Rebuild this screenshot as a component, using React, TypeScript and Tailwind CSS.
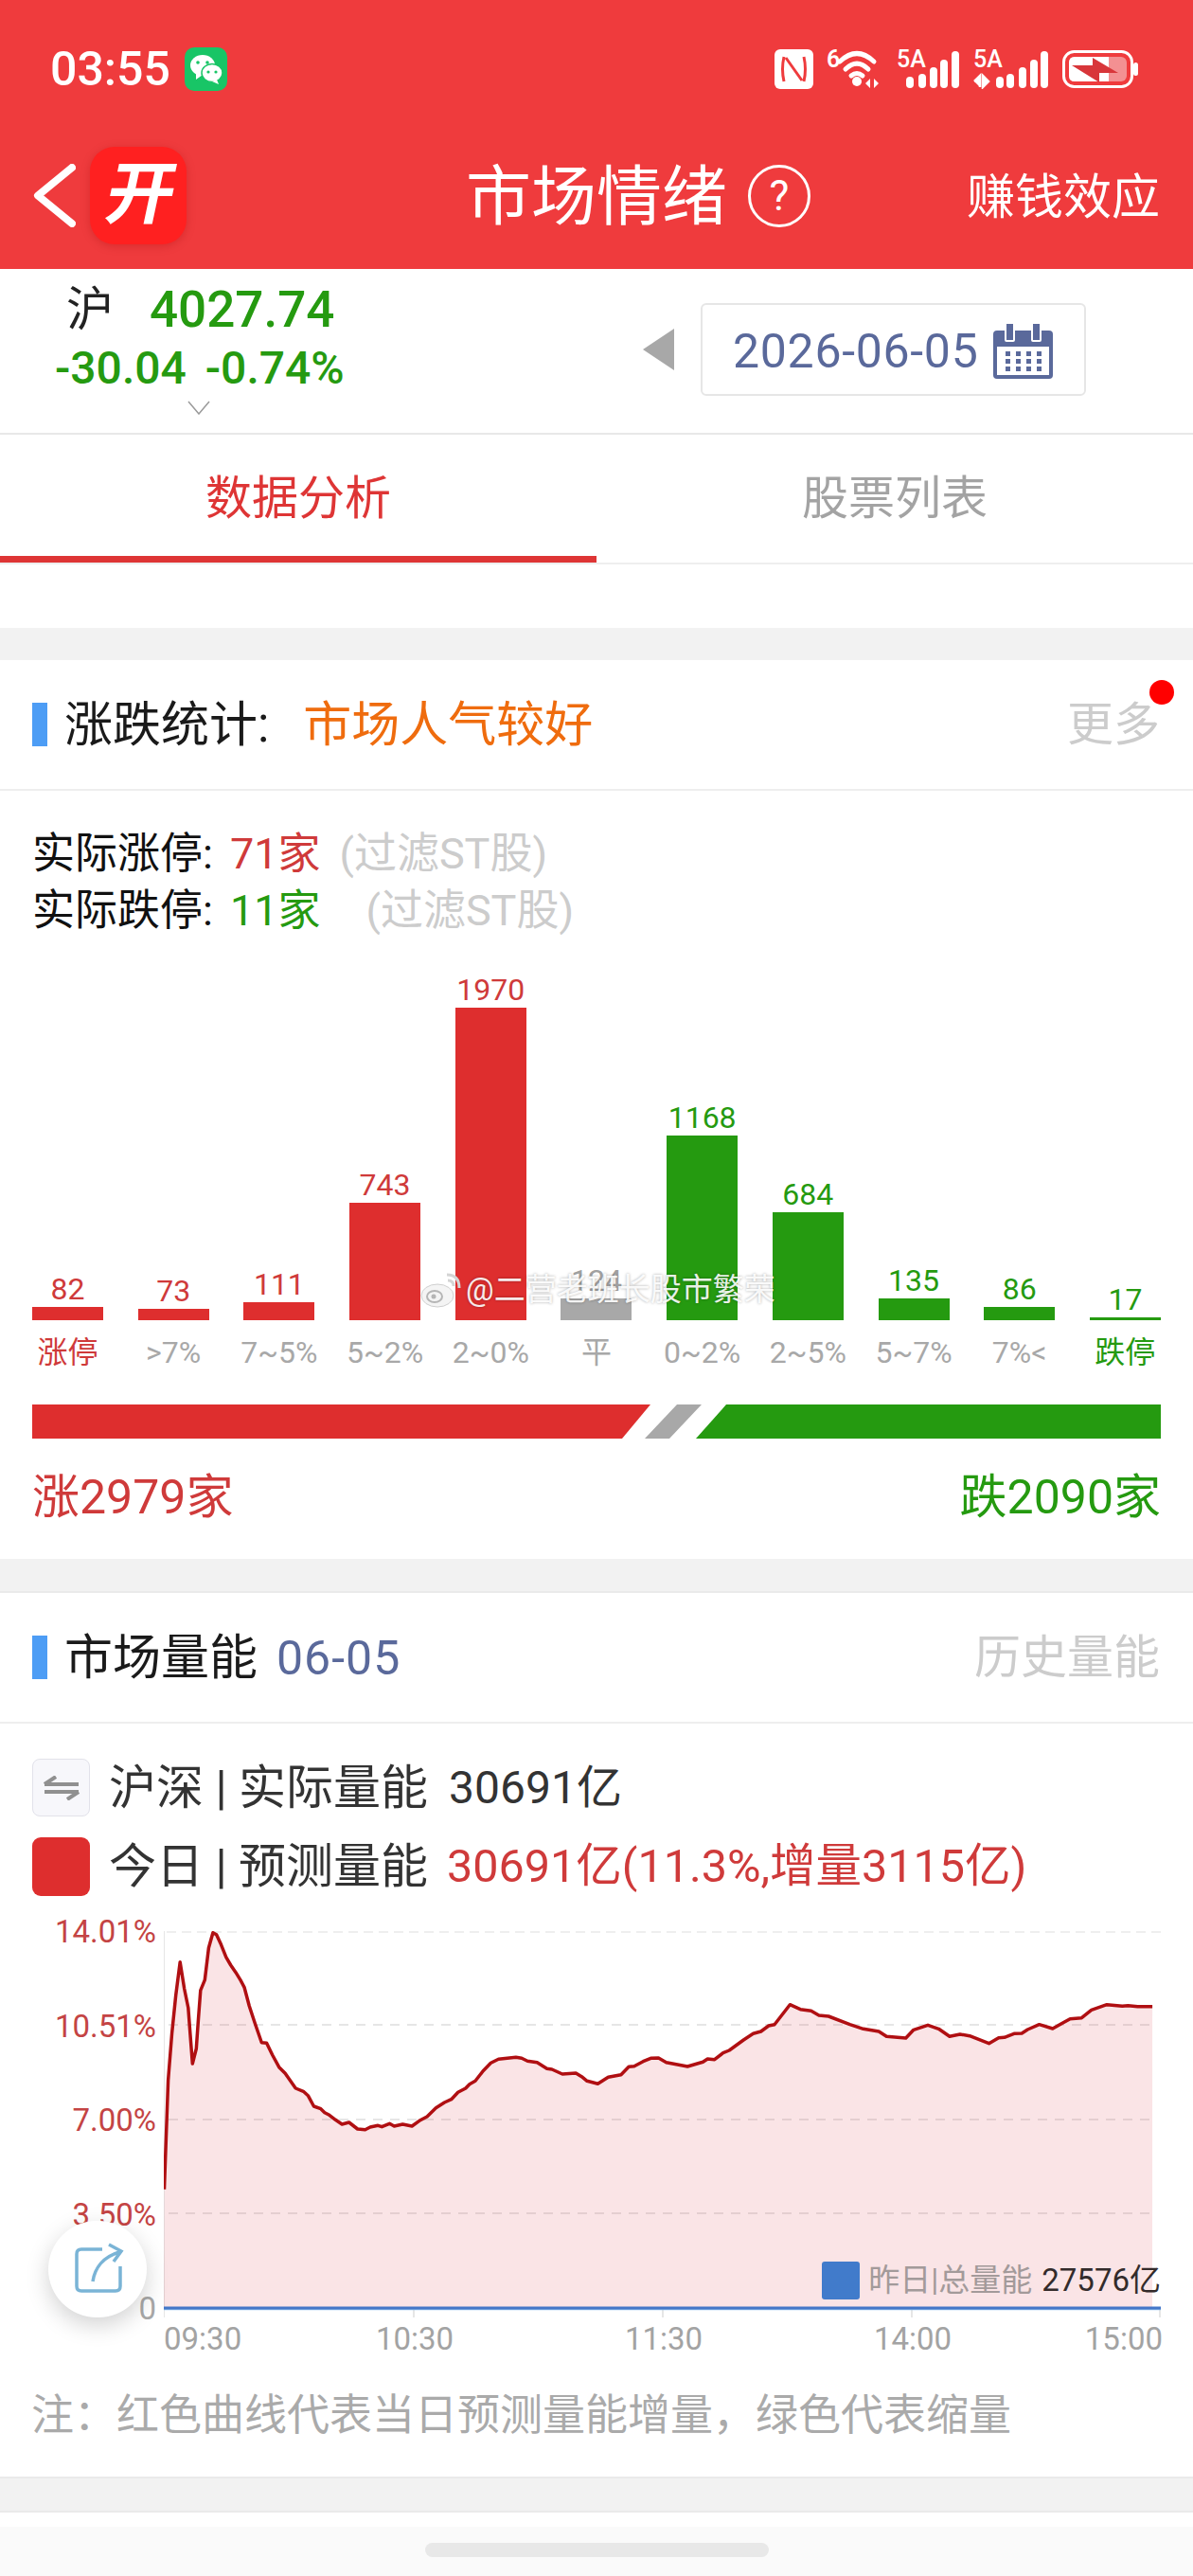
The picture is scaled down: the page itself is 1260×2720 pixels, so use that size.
// Market sentiment screen: index strip, advance/decline histogram, volume chart.
const bars = [
  { value: "82", label: "涨停", h: 14, kind: "up", labelClass: "text-[#cf3a3a]" },
  { value: "73", label: ">7%", h: 12, kind: "up", labelClass: "text-[#a8a8a8]" },
  { value: "111", label: "7~5%", h: 19, kind: "up", labelClass: "text-[#a8a8a8]" },
  { value: "743", label: "5~2%", h: 124, kind: "up", labelClass: "text-[#a8a8a8]" },
  { value: "1970", label: "2~0%", h: 330, kind: "up", labelClass: "text-[#a8a8a8]" },
  { value: "124", label: "平", h: 23, kind: "flat", labelClass: "text-[#a8a8a8]" },
  { value: "1168", label: "0~2%", h: 195, kind: "down", labelClass: "text-[#a8a8a8]" },
  { value: "684", label: "2~5%", h: 114, kind: "down", labelClass: "text-[#a8a8a8]" },
  { value: "135", label: "5~7%", h: 23, kind: "down", labelClass: "text-[#a8a8a8]" },
  { value: "86", label: "7%<", h: 14, kind: "down", labelClass: "text-[#a8a8a8]" },
  { value: "17", label: "跌停", h: 3, kind: "down", labelClass: "text-[#259a10]" },
];

// Curve traced off the reference, two halves because they were read from two crops.
const curveLeft: [number, number][] = [
  [425, 935], [432, 700], [435, 590], [445, 440], [455, 320], [466, 215], [477, 300], [487, 360],
  [492, 440], [498, 537], [508, 490], [513, 400], [519, 305], [530, 272], [540, 170], [551, 122],
  [560, 128], [572, 160], [585, 200], [597, 225], [610, 248], [622, 272], [632, 295], [645, 355],
  [660, 410], [677, 470], [690, 472], [705, 510], [722, 548], [738, 568], [765, 615], [785, 625],
  [797, 638], [812, 672], [830, 680], [840, 692], [852, 700], [868, 715], [885, 729], [903, 723],
  [925, 744], [945, 746], [958, 738], [978, 733], [988, 737], [1008, 727], [1020, 735], [1042, 729],
  [1066, 735], [1085, 718], [1105, 705], [1128, 677], [1150, 660], [1168, 650], [1185, 628],
  [1205, 615], [1215, 602], [1230, 592], [1250, 560], [1270, 535], [1290, 523], [1335, 517],
  [1350, 520], [1365, 529], [1390, 533], [1415, 553], [1428, 555], [1455, 570], [1490, 567], [1505, 578],
];
const curveRight: [number, number][] = [
  [0, 592], [28, 601], [55, 580], [88, 572], [108, 547], [122, 545], [145, 530], [165, 520], [185, 519],
  [205, 533], [260, 546], [300, 532], [312, 522], [330, 524], [352, 503], [368, 495], [405, 462],
  [430, 442], [450, 435], [470, 417], [485, 413], [525, 350], [552, 365], [580, 370], [600, 384],
  [625, 387], [680, 413], [715, 427], [755, 435], [775, 451], [825, 456], [845, 430], [882, 415],
  [910, 427], [938, 451], [965, 444], [990, 449], [1040, 473], [1065, 455], [1080, 454], [1105, 442],
  [1125, 441], [1140, 429], [1170, 413], [1205, 426], [1230, 409], [1250, 395], [1280, 392], [1305, 367],
  [1345, 350], [1385, 355], [1400, 353], [1425, 356], [1463, 356],
];
const curve = [
  ...curveLeft.map(([x, y]) => [x / 2.45 - 173, y / 3 - 39]),
  ...curveRight.map(([x, y]) => [620 + x / 2.45 - 173, y / 3 - 39]),
]
  .map(([x, y]) => `${x.toFixed(1)},${y.toFixed(1)}`)
  .join(" ");

function Signal({ arrows }: { arrows?: boolean }) {
  const xs = arrows ? [24, 35, 48, 60, 71] : [10, 23, 35, 46, 58];
  const hs = [12, 15, 22, 30, 39];
  const w = arrows ? 79 : 66;
  // viewBox starts above 0 so the 5A's line box stays inside the svg
  return (
    <svg width={w} height={50} viewBox={`0 -8 ${w} 50`} className="mb-[8px] block">
      <text x="0" y="19" fontSize="25" fontWeight="500" fill="#fff">5A</text>
      {arrows && <path d="M1 34 L7 28 V40 M10 28 L16 34 L10 40 Z" stroke="#fff" strokeWidth="2.5" fill="#fff" />}
      {xs.map((x, i) => (
        <rect key={x} x={x} y={41 - hs[i]} width="8" height={hs[i]} rx="4" fill="#fff" />
      ))}
    </svg>
  );
}

function StatusIcons() {
  return (
    <div className="flex items-center">
      {/* NFC */}
      <svg width="41" height="42" viewBox="0 0 41 42" className="block">
        <rect width="41" height="42" rx="6" fill="#fff" />
        <path d="M10 8 q-3 13 0 26 M31 8 q3 13 0 26 M12 9 L29 33" stroke="#ef3b3d" strokeWidth="3" fill="none" />
      </svg>
      {/* wifi 6 */}
      <svg width="62" height="52" viewBox="0 -8 62 52" className="mb-[8px] ml-[14px] block">
        <text x="0" y="20" fontSize="25" fontWeight="600" fill="#fff">6</text>
        <path d="M14 14 Q32 -3 50 14 M20 22 Q32 10 44 22 M26 29 Q32 24 38 29" stroke="#fff" strokeWidth="5" strokeLinecap="round" fill="none" />
        <circle cx="32" cy="35" r="5" fill="#fff" />
        <path d="M41 37 L46 32 V42 Z M50 32 L55 37 L50 42 Z" fill="#fff" />
      </svg>
      <div className="ml-[12px]"><Signal /></div>
      <div className="ml-[15px]"><Signal arrows /></div>
      {/* battery */}
      <svg width="81" height="40" viewBox="0 0 81 40" className="ml-[15px] block">
        <rect x="1.5" y="1.5" width="72" height="37" rx="11" fill="none" stroke="#fff" strokeWidth="3" />
        <rect x="7" y="7" width="61" height="26" rx="6" fill="#f39092" />
        <path d="M7 13 q0 -6 6 -6 H49 V33 H13 q-6 0 -6 -6 Z" fill="#fff" />
        <path d="M10 16 H32 V8 L59 24 H39 V34 Z" fill="#d8363a" />
        <rect x="75" y="13" width="5" height="14" rx="2.5" fill="#fff" />
      </svg>
    </div>
  );
}

function SectionHeader({ children, right }: { children: React.ReactNode; right: string }) {
  return (
    <div className="relative flex h-[138px] items-center border-b-2 border-[#eeeeee] pl-[34px] pr-[35px]">
      <span className="h-[46px] w-[16px] bg-[#4d9df5]" />
      <div className="ml-[18px] flex items-center pt-[2px] text-[51px] text-[#1a1a1a]">{children}</div>
      <span className="ml-auto pt-[2px] text-[49px] text-[#cccccc]">{right}</span>
    </div>
  );
}

function Histogram() {
  return (
    <>
      <div className="mt-[28px] flex h-[374px] items-end justify-between px-[34px]">
        {bars.map((b) => {
          const barColor = b.kind === "up" ? "bg-[#de2e2e]" : b.kind === "down" ? "bg-[#259a10]" : "bg-[#a8a8a8]";
          const textColor = b.kind === "up" ? "text-[#cf3a3a]" : b.kind === "down" ? "text-[#259a10]" : "text-[#a0a0a0]";
          return (
            <div key={b.label} className="flex w-[75px] flex-col items-center">
              <span className={`mb-[3px] text-[32px] leading-[32px] ${textColor}`}>{b.value}</span>
              <div className={`w-[75px] ${barColor}`} style={{ height: b.h }} />
            </div>
          );
        })}
      </div>
      <div className="mt-[14px] flex justify-between px-[34px]">
        {bars.map((b) => (
          <div key={b.label} className={`flex w-[75px] justify-center whitespace-nowrap text-[32px] leading-[40px] ${b.labelClass}`}>
            {b.label}
          </div>
        ))}
      </div>
      <div className="mt-[35px] flex h-[36px] pl-[34px]">
        <div className="h-full w-[653px] bg-[#de2e2e] [clip-path:polygon(0_0,100%_0,calc(100%-30px)_100%,0_100%)]" />
        <div className="-ml-[6px] h-full w-[60px] bg-[#a8a8a8] [clip-path:polygon(34px_0,100%_0,26px_100%,0_100%)]" />
        <div className="-ml-[6px] h-full w-[491px] bg-[#259a10] [clip-path:polygon(32px_0,100%_0,100%_100%,0_100%)]" />
      </div>
      <div className="mt-[32px] flex justify-between pl-[34px] pr-[34px] text-[50px] leading-[60px]">
        <span className="text-[#cf3a3a]">涨2979家</span>
        <span className="text-[#259a10]">跌2090家</span>
      </div>
    </>
  );
}

function VolumeChart() {
  return (
    <div className="relative mt-[18px]">
      <div className="flex">
        <div className="flex h-[438px] w-[165px] flex-col justify-between text-right text-[33px] leading-[40px] text-[#c44444]">
          <span>14.01%</span>
          <span>10.51%</span>
          <span>7.00%</span>
          <span>3.50%</span>
          <span className="text-[#a8a8a8]">0</span>
        </div>
        <svg width="1053" height="408" viewBox="0 0 1053 408" className="ml-[8px] mt-[19px] block">
          <line x1="0" y1="0" x2="0" y2="408" stroke="#e6e6e6" strokeWidth="2" />
          <line x1="3" y1="1" x2="1053" y2="1" stroke="#eeeeee" strokeWidth="2" strokeDasharray="10 6" />
          {[99, 199, 298].map((y) => (
            <line key={y} x1="5" y1={y} x2="1049" y2={y} stroke="#e6e6e6" strokeWidth="2" strokeDasharray="10 8" />
          ))}
          {[264, 527, 790, 1052].map((x) => (
            <line key={x} x1={x} y1="398" x2={x} y2="408" stroke="#e6e6e6" strokeWidth="2" />
          ))}
          <polygon points={`${curve} 1044,398 0,398`} fill="#d81e2e" fillOpacity="0.12" />
          <polyline points={curve} fill="none" stroke="#b00f12" strokeWidth="3.5" strokeLinejoin="round" />
          <line x1="0" y1="399.5" x2="1053" y2="399.5" stroke="#8cc0ee" strokeWidth="1.5" />
          <line x1="0" y1="398" x2="1053" y2="398" stroke="#4477c8" strokeWidth="3" />
        </svg>
      </div>
      {/* legend sits on top of the fill */}
      <div className="absolute right-[34px] top-[368px] flex h-[40px] items-center">
        <span className="h-[40px] w-[40px] rounded-[3px] bg-[#417bcb]" />
        <span className="ml-[9px] text-[33px] text-[#a39a9a]">昨日|总量能</span>
        <span className="ml-[10px] text-[33px] text-[#332b2b]">27576亿</span>
      </div>
      <div className="-mt-[8px] flex pl-[173px] text-[33px] leading-[40px] text-[#a3a3a3]">
        <span className="w-[84px]">09:30</span>
        <span className="ml-[139px] w-[84px] text-center">10:30</span>
        <span className="ml-[179px] w-[84px] text-center">11:30</span>
        <span className="ml-[179px] w-[84px] text-center">14:00</span>
        <span className="ml-[138px] w-[84px] text-right">15:00</span>
      </div>
    </div>
  );
}

export default function App() {
  return (
    <div className="relative h-[2720px] w-[1260px] overflow-hidden bg-white [font-family:Roboto,'Noto_Sans_CJK_SC',sans-serif]">
      <header className="h-[284px] bg-[#ef3b3d] text-white">
        <div className="flex h-[146px] items-center justify-between pl-[53px] pr-[57px]">
          <div className="flex items-center">
            <span className="text-[50px] font-medium leading-none">03:55</span>
            <svg width="45" height="46" viewBox="0 0 45 46" className="ml-[15px] block">
              <rect width="45" height="46" rx="10" fill="#18c566" />
              <ellipse cx="19" cy="19" rx="13" ry="11" fill="#fff" />
              <path d="M12 27 L12 34 L19 29 Z" fill="#fff" />
              <ellipse cx="29" cy="27" rx="11" ry="9.5" fill="#fff" stroke="#18c566" strokeWidth="1.5" />
              <path d="M34 34 L36 39 L29 36 Z" fill="#fff" />
              <circle cx="14" cy="16" r="1.8" fill="#18c566" />
              <circle cx="24" cy="16" r="1.8" fill="#18c566" />
              <circle cx="25" cy="26" r="1.6" fill="#18c566" />
              <circle cx="33" cy="26" r="1.6" fill="#18c566" />
            </svg>
          </div>
          <StatusIcons />
        </div>
        <div className="flex h-[120px] items-center pl-[35px] pr-[35px]">
          <svg width="45" height="67" viewBox="0 0 45 67" className="block">
            <path d="M41 4 L5 33.5 L41 63" fill="none" stroke="#fff" strokeWidth="8" strokeLinecap="round" strokeLinejoin="round" />
          </svg>
          <div className="ml-[15px] flex h-[103px] w-[102px] items-center justify-center rounded-[26px] bg-[#ff2020] shadow-[0_2px_10px_rgba(150,0,0,0.25)]">
            <span className="ml-[6px] -skew-x-12 text-[72px] font-bold leading-none">开</span>
          </div>
          <span className="ml-[295px] pt-[5px] text-[69px] leading-none">市场情绪</span>
          <span className="ml-[22px] mt-[2px] flex h-[66px] w-[66px] items-center justify-center rounded-full border-[3px] border-white text-[44px] leading-none">?</span>
          <span className="ml-auto pt-[5px] text-[51px] leading-none">赚钱效应</span>
        </div>
      </header>

      <div className="flex h-[175px] border-b-2 border-[#e8e8e8]">
        <div>
          <div className="ml-[70px] mt-[18px] flex h-[50px] items-center">
            <span className="text-[50px] text-[#222222]">沪</span>
            <span className="ml-[38px] text-[53px] font-medium leading-none text-[#259a10]">4027.74</span>
          </div>
          <div className="ml-[58px] mt-[12px] flex h-[50px] items-center gap-[20px] text-[48px] font-medium text-[#259a10]">
            <span>-30.04</span>
            <span>-0.74%</span>
          </div>
          <svg width="24" height="15" viewBox="0 0 24 15" className="ml-[198px] mt-[9px] block">
            <path d="M1 1 L12 14 L23 1" fill="none" stroke="#9a9a9a" strokeWidth="1.5" />
          </svg>
        </div>
        <div className="ml-auto mr-[113px] mt-[36px] flex h-[98px] items-center">
          <svg width="33" height="44" viewBox="0 0 33 44" className="block">
            <path d="M33 0 V44 L0 22 Z" fill="#a8a8a8" />
          </svg>
          <div className="ml-[28px] flex h-[98px] w-[407px] items-center rounded-[6px] border-2 border-[#e6e6e6] pl-[32px]">
            <span className="pt-[4px] text-[50px] leading-none tracking-[0.7px] text-[#5a699b]">2026-06-05</span>
            <svg width="63" height="59" viewBox="0 0 63 59" className="ml-[16px] mt-[2px] block">
              <rect y="8" width="63" height="51" rx="4" fill="#5a699b" />
              <rect x="4" y="25" width="55" height="30" fill="#fff" />
              <rect x="13" y="0" width="9" height="19" rx="1" fill="#5a699b" stroke="#fff" strokeWidth="2" />
              <rect x="41" y="0" width="9" height="19" rx="1" fill="#5a699b" stroke="#fff" strokeWidth="2" />
              {[30, 38, 46].map((y) =>
                [13, 24, 35, 46].map((x) => <rect key={`${x}-${y}`} x={x} y={y} width="5" height="5" fill="#5a699b" />),
              )}
            </svg>
          </div>
        </div>
      </div>

      <div className="flex h-[137px] border-b-2 border-[#eeeeee] text-[49px]">
        <div className="flex w-[630px] flex-col text-[#de3535]">
          <div className="flex flex-1 items-center justify-center pt-[8px]">数据分析</div>
          <div className="h-[7px] bg-[#de3535]" />
        </div>
        <div className="flex w-[630px] items-center justify-center text-[#a3a3a3]">股票列表</div>
      </div>
      <div className="h-[67px]" />
      <div className="h-[34px] bg-[#f2f2f2]" />

      <section className="pb-[35px]">
        <SectionHeader right="更多">
          <span>涨跌统计:</span>
          <span className="ml-[36px] text-[#ef6c0e]">市场人气较好</span>
        </SectionHeader>
        <span className="absolute left-[1214px] top-[718px] h-[26px] w-[26px] rounded-full bg-[#ff0000]" />
        <div className="mt-[37px] pl-[34px] text-[45px] leading-[60px] text-[#111111]">
          <div className="flex">
            <span>实际涨停:</span>
            <span className="ml-[18px] text-[#cf3a3a]">71家</span>
            <span className="ml-[20px] text-[#cccccc]">(过滤ST股)</span>
          </div>
          <div className="flex">
            <span>实际跌停:</span>
            <span className="ml-[18px] text-[#259a10]">11家</span>
            <span className="ml-[48px] text-[#cccccc]">(过滤ST股)</span>
          </div>
        </div>
        <Histogram />
      </section>
      <div className="h-[36px] border-b-2 border-[#eaeaea] bg-[#f2f2f2]" />

      <section className="pb-[34px]">
        <SectionHeader right="历史量能">
          <span>市场量能</span>
          <span className="ml-[20px] text-[50px] tracking-[1px] text-[#5a699b]">06-05</span>
        </SectionHeader>
        <div className="mt-[37px] pl-[34px] leading-none">
          <div className="flex h-[61px] items-center text-[#333333]">
            <span className="flex h-[61px] w-[61px] items-center justify-center rounded-[8px] border border-[#e2e2ea] bg-[#f7f7fb]">
              <svg width="40" height="26" viewBox="0 0 40 26" className="block">
                <path d="M2 9 H38 M14 1 L2 9 M2 17 H38 M26 25 L38 17" fill="none" stroke="#909090" strokeWidth="4" />
              </svg>
            </span>
            <span className="ml-[20px] text-[50px]">沪深 | 实际量能</span>
            <span className="ml-[22px] text-[48px]">30691亿</span>
          </div>
          <div className="mt-[22px] flex h-[62px] items-center text-[#333333]">
            <span className="h-[62px] w-[61px] rounded-[9px] bg-[#de2e2e]" />
            <span className="ml-[20px] text-[50px]">今日 | 预测量能</span>
            <span className="ml-[20px] text-[48.5px] text-[#cf3a3a]">30691亿(11.3%,增量3115亿)</span>
          </div>
        </div>
        <VolumeChart />
        <p className="mt-[31px] pl-[33px] text-[45px] leading-[60px] text-[#aaaaaa]">注：红色曲线代表当日预测量能增量，绿色代表缩量</p>
      </section>
      <div className="h-[38px] border-y-2 border-[#eaeaea] bg-[#f2f2f2]" />
      <div className="h-[15px]" />
      <div className="flex h-[52px] justify-center bg-[#fafafa] pt-[17px]">
        <span className="h-[15px] w-[363px] rounded-full bg-[#e8e8e8]" />
      </div>

      {/* floating share button */}
      <div className="absolute left-[51px] top-[2345px] flex h-[102px] w-[104px] items-center justify-center rounded-full bg-white shadow-[0_8px_24px_rgba(0,0,0,0.18)]">
        <svg width="66" height="62" viewBox="0 0 66 62" className="block">
          <path d="M38 10 H16 q-5 0 -5 5 V49 q0 5 5 5 H52 q5 0 5 -5 V28" fill="none" stroke="#7ab4d6" strokeWidth="3.5" />
          <path d="M28 44 C30 30 39 18 56 13 M45 5 L58 12 L50 23" fill="none" stroke="#7ab4d6" strokeWidth="3.5" />
        </svg>
      </div>

      {/* repost watermark across the histogram */}
      <div className="absolute left-[444px] top-[1342px] flex items-center text-[33px] leading-[40px] text-white/90 [text-shadow:0_0_3px_rgba(0,0,0,0.35)]">
        <svg width="44" height="38" viewBox="0 0 44 38" className="block">
          <ellipse cx="18" cy="25" rx="17" ry="12" fill="#f4f4f4" stroke="#cfcfcf" />
          <ellipse cx="15" cy="26" rx="8" ry="6" fill="none" stroke="#b5b5b5" strokeWidth="2" />
          <circle cx="14" cy="26" r="2.5" fill="#b5b5b5" />
          <path d="M28 3 Q41 3 41 17 M29 9 Q35 9 35 15" fill="none" stroke="#d4d4d4" strokeWidth="3" />
        </svg>
        <span className="ml-[4px]">@二营老班长股市繁荣</span>
      </div>
    </div>
  );
}
